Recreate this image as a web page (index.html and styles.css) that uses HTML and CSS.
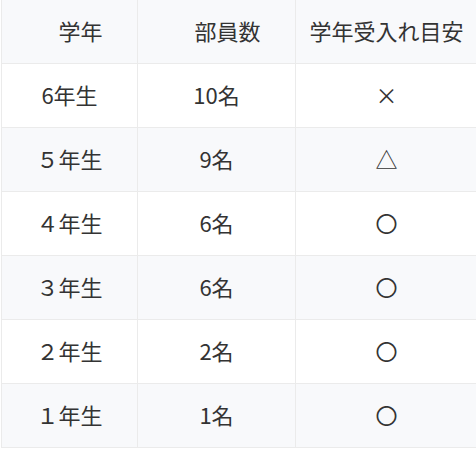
FILE: index.html
```html
<!DOCTYPE html>
<html lang="ja">
<head>
<meta charset="utf-8">
<link rel="stylesheet" href="styles.css">
</head>
<body>
<table class="grade-table">
  <colgroup>
    <col class="col-grade">
    <col class="col-count">
    <col class="col-accept">
  </colgroup>
  <thead>
    <tr>
      <th class="shifted">学年</th>
      <th class="shifted">部員数</th>
      <th>学年受入れ目安</th>
    </tr>
  </thead>
  <tbody>
    <tr><td>6年生</td><td>10名</td><td>×</td></tr>
    <tr><td>５年生</td><td>9名</td><td>△</td></tr>
    <tr><td>４年生</td><td>6名</td><td>〇</td></tr>
    <tr><td>３年生</td><td>6名</td><td>〇</td></tr>
    <tr><td>２年生</td><td>2名</td><td>〇</td></tr>
    <tr><td>１年生</td><td>1名</td><td>〇</td></tr>
  </tbody>
</table>
</body>
</html>
```

FILE: styles.css
```css
html, body {
  margin: 0;
  padding: 0;
  background: #ffffff;
}

body {
  padding-left: 1px;
  font-family: "Noto Sans CJK JP", "Noto Sans", sans-serif;
  color: #333333;
}

.grade-table {
  margin-top: -1px;
  width: 476px;
  border-collapse: collapse;
  table-layout: fixed;
  font-size: 22px;
}

.col-grade { width: 136px; }
.col-count { width: 158px; }
.col-accept { width: 182px; }

.grade-table th,
.grade-table td {
  height: 61px;
  padding: 0 0 2px 0;
  border: 1px solid #ebebeb;
  text-align: center;
  vertical-align: middle;
  font-weight: normal;
  line-height: 1.2;
}

.grade-table thead tr,
.grade-table tbody tr:nth-child(even) {
  background: #f8f9fb;
}

.grade-table th.shifted {
  padding-left: 22px;
}
```
